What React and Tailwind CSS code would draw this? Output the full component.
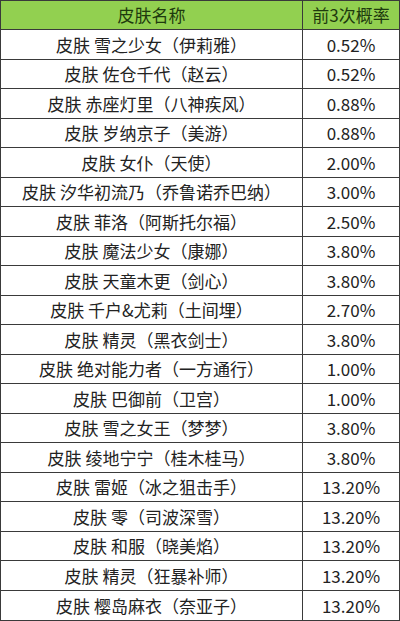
import { Fragment } from 'react'

const rows = [
  ['皮肤 雪之少女（伊莉雅）', '0.52%'],
  ['皮肤 佐仓千代（赵云）', '0.52%'],
  ['皮肤 赤座灯里（八神疾风）', '0.88%'],
  ['皮肤 岁纳京子（美游）', '0.88%'],
  ['皮肤 女仆（天使）', '2.00%'],
  ['皮肤 汐华初流乃（乔鲁诺乔巴纳）', '3.00%'],
  ['皮肤 菲洛（阿斯托尔福）', '2.50%'],
  ['皮肤 魔法少女（康娜）', '3.80%'],
  ['皮肤 天童木更（剑心）', '3.80%'],
  ['皮肤 千户&尤莉（土间埋）', '2.70%'],
  ['皮肤 精灵（黑衣剑士）', '3.80%'],
  ['皮肤 绝对能力者（一方通行）', '1.00%'],
  ['皮肤 巴御前（卫宫）', '1.00%'],
  ['皮肤 雪之女王（梦梦）', '3.80%'],
  ['皮肤 绫地宁宁（桂木桂马）', '3.80%'],
  ['皮肤 雷姬（冰之狙击手）', '13.20%'],
  ['皮肤 零（司波深雪）', '13.20%'],
  ['皮肤 和服（晓美焰）', '13.20%'],
  ['皮肤 精灵（狂暴补师）', '13.20%'],
  ['皮肤 樱岛麻衣（奈亚子）', '13.20%'],
]

const App = () => {
  return (
    <div className="w-[400px] h-[621px] bg-white" style={{ fontFamily: '"Noto Sans CJK SC", "Noto Sans", sans-serif' }}>
      <div className="grid grid-cols-[302px_1fr] grid-rows-[repeat(21,1fr)] h-[621px] border border-[#3a3a3a] text-[17px] text-[#222]">
        <div className="bg-[#92d050] text-[#1e3a0e] flex items-center justify-center border-r border-b border-[#3a3a3a]">皮肤名称</div>
        <div className="bg-[#92d050] text-[#1e3a0e] flex items-center justify-center border-b border-[#3a3a3a]">前3次概率</div>
        {rows.map(([name, rate], i) => (
          <Fragment key={i}>
            <div className={`flex items-center justify-center border-r border-[#3a3a3a] ${i < rows.length - 1 ? 'border-b' : ''}`}>{name}</div>
            <div className={`flex items-center justify-center border-[#3a3a3a] ${i < rows.length - 1 ? 'border-b' : ''}`}>{rate}</div>
          </Fragment>
        ))}
      </div>
    </div>
  )
}

export default App
